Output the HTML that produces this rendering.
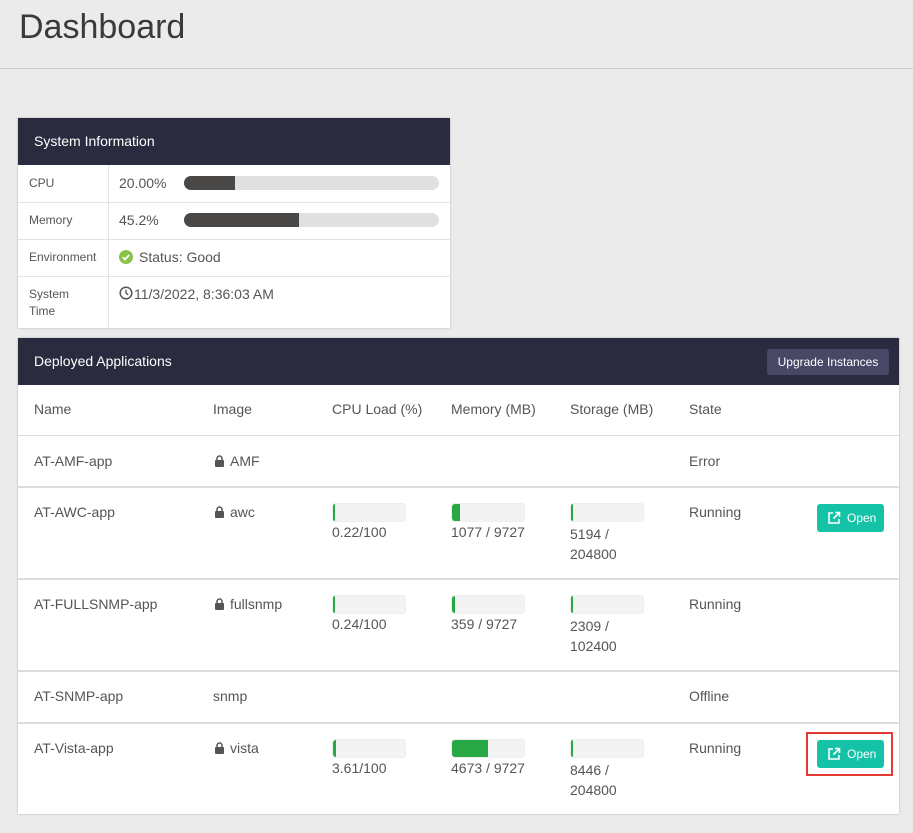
<!DOCTYPE html>
<html><head><style>
*{box-sizing:border-box;margin:0;padding:0}
body{width:913px;height:833px;background:#ebebeb;font-family:"Liberation Sans",Arial,sans-serif;position:relative;overflow:hidden;color:#555}
.a{position:absolute}
h1{position:absolute;left:19px;top:8px;font-size:34px;font-weight:normal;color:#3a3a3a;letter-spacing:0}
.card{position:absolute;background:#fff;box-shadow:0 0 2px rgba(0,0,0,.25)}
.hd{position:absolute;left:0;right:0;top:0;background:#2b2b40;color:#fff;font-size:14px}
.lbl{font-size:12px;color:#555}
.t{font-size:14px;color:#555}
.bar{position:absolute;background:#e0e0e0;border-radius:7px;height:14px;overflow:hidden}
.bar i{position:absolute;left:0;top:0;bottom:0;background:#4a4846}
.pb{position:absolute;width:74px;height:19px;background:#f3f3f3;border-radius:3px;overflow:hidden;border:1px solid #eee}
.pb i{position:absolute;left:0;top:0;bottom:0;background:#28a745;border-radius:3px 0 0 3px}
.hl{position:absolute;left:0;right:0;height:2px;background:#ddd}
.btn{position:absolute;width:67px;height:28px;background:#14c3a7;border-radius:3px;color:#fff;font-size:12px;line-height:28px;padding-left:30px}
.btn svg{position:absolute;left:10px;top:7px}
</style></head><body>
<h1>Dashboard</h1>
<div class="a" style="left:0;right:0;top:68px;height:1px;background:#ccc"></div>

<div class="card" style="left:18px;top:118px;width:432px;height:210px">
 <div class="hd" style="height:47px;padding:15px 16px;">System Information</div>
 <div class="a" style="left:90px;top:47px;width:1px;bottom:0;background:#e3e3e3"></div>
 <div class="a" style="left:0;right:0;top:84px;height:1px;background:#e3e3e3"></div>
 <div class="a" style="left:0;right:0;top:121px;height:1px;background:#e3e3e3"></div>
 <div class="a" style="left:0;right:0;top:158px;height:1px;background:#e3e3e3"></div>
 <div class="a lbl" style="left:11px;top:58px">CPU</div>
 <div class="a t" style="left:101px;top:57px">20.00%</div>
 <div class="bar" style="left:166px;top:58px;width:255px"><i style="width:51px"></i></div>
 <div class="a lbl" style="left:11px;top:95px">Memory</div>
 <div class="a t" style="left:101px;top:94px">45.2%</div>
 <div class="bar" style="left:166px;top:95px;width:255px"><i style="width:115px"></i></div>
 <div class="a lbl" style="left:11px;top:132px">Environment</div>
 <svg class="a" style="left:101px;top:132px" width="14" height="14" viewBox="0 0 14 14"><circle cx="7" cy="7" r="7" fill="#8bc34a"/><path d="M3.8 7.2l2.2 2.2 4.2-4.4" stroke="#fff" stroke-width="1.8" fill="none"/></svg>
 <div class="a t" style="left:121px;top:131px">Status: Good</div>
 <div class="a lbl" style="left:11px;top:168px;line-height:17px">System<br>Time</div>
 <svg class="a" style="left:101px;top:168px" width="14" height="14" viewBox="0 0 14 14"><circle cx="7" cy="7" r="5.8" stroke="#555" stroke-width="1.5" fill="none"/><path d="M7 3.8V7.3l2.2 1.5" stroke="#555" stroke-width="1.4" fill="none"/></svg>
 <div class="a t" style="left:116px;top:168px">11/3/2022, 8:36:03 AM</div>
</div>

<div class="card" style="left:18px;top:338px;width:881px;height:476px">
 <div class="hd" style="height:47px;padding:15px 16px;">Deployed Applications</div>
 <div class="a" style="left:749px;top:11px;width:122px;height:26px;background:#474766;border-radius:3px;color:#fff;font-size:12px;line-height:26px;text-align:center">Upgrade Instances</div>
 <div class="a t" style="left:16px;top:63px">Name</div>
 <div class="a t" style="left:195px;top:63px">Image</div>
 <div class="a t" style="left:314px;top:63px">CPU Load (%)</div>
 <div class="a t" style="left:433px;top:63px">Memory (MB)</div>
 <div class="a t" style="left:552px;top:63px">Storage (MB)</div>
 <div class="a t" style="left:671px;top:63px">State</div>
 <div class="hl" style="top:97px;height:1px"></div>
 <div class="hl" style="top:148px"></div>
 <div class="hl" style="top:240px"></div>
 <div class="hl" style="top:332px"></div>
 <div class="hl" style="top:384px"></div>

 <div class="a t" style="left:16px;top:115px">AT-AMF-app</div>
 <div class="a t" style="left:212px;top:115px">AMF</div>
 <div class="a t" style="left:671px;top:115px">Error</div>

 <div class="a t" style="left:16px;top:166px">AT-AWC-app</div>
 <div class="a t" style="left:212px;top:166px">awc</div>
 <div class="pb" style="left:314px;top:165px"><i style="width:2px"></i></div>
 <div class="a t" style="left:314px;top:186px">0.22/100</div>
 <div class="pb" style="left:433px;top:165px"><i style="width:8px"></i></div>
 <div class="a t" style="left:433px;top:186px">1077 / 9727</div>
 <div class="pb" style="left:552px;top:165px"><i style="width:2px"></i></div>
 <div class="a t" style="left:552px;top:186px;line-height:20px">5194 /<br>204800</div>
 <div class="a t" style="left:671px;top:166px">Running</div>
 <div class="btn" style="left:799px;top:166px"><svg width="14" height="14" viewBox="0 0 14 14" fill="none" stroke="#fff" stroke-width="1.6"><path d="M6 2H2v10h10V8"/><path d="M8 1.5h4.5V6M12.5 1.5L6.5 7.5"/></svg>Open</div>

 <div class="a t" style="left:16px;top:258px">AT-FULLSNMP-app</div>
 <div class="a t" style="left:212px;top:258px">fullsnmp</div>
 <div class="pb" style="left:314px;top:257px"><i style="width:2px"></i></div>
 <div class="a t" style="left:314px;top:278px">0.24/100</div>
 <div class="pb" style="left:433px;top:257px"><i style="width:3px"></i></div>
 <div class="a t" style="left:433px;top:278px">359 / 9727</div>
 <div class="pb" style="left:552px;top:257px"><i style="width:2px"></i></div>
 <div class="a t" style="left:552px;top:278px;line-height:20px">2309 /<br>102400</div>
 <div class="a t" style="left:671px;top:258px">Running</div>

 <div class="a t" style="left:16px;top:350px">AT-SNMP-app</div>
 <div class="a t" style="left:195px;top:350px">snmp</div>
 <div class="a t" style="left:671px;top:350px">Offline</div>

 <div class="a t" style="left:16px;top:402px">AT-Vista-app</div>
 <div class="a t" style="left:212px;top:402px">vista</div>
 <div class="pb" style="left:314px;top:401px"><i style="width:3px"></i></div>
 <div class="a t" style="left:314px;top:422px">3.61/100</div>
 <div class="pb" style="left:433px;top:401px"><i style="width:36px"></i></div>
 <div class="a t" style="left:433px;top:422px">4673 / 9727</div>
 <div class="pb" style="left:552px;top:401px"><i style="width:2px"></i></div>
 <div class="a t" style="left:552px;top:422px;line-height:20px">8446 /<br>204800</div>
 <div class="a t" style="left:671px;top:402px">Running</div>
 <div class="a" style="left:788px;top:394px;width:87px;height:44px;border:2px solid #e53935"></div>
 <div class="btn" style="left:799px;top:402px"><svg width="14" height="14" viewBox="0 0 14 14" fill="none" stroke="#fff" stroke-width="1.6"><path d="M6 2H2v10h10V8"/><path d="M8 1.5h4.5V6M12.5 1.5L6.5 7.5"/></svg>Open</div>
</div>

<svg class="a" style="left:214px;top:455px" width="11" height="12" viewBox="0 0 11 12"><rect x="1" y="5" width="9" height="7" rx="1" fill="#555"/><path d="M3 5V3.5a2.5 2.5 0 0 1 5 0V5" stroke="#555" stroke-width="1.5" fill="none"/></svg>
<svg class="a" style="left:214px;top:506px" width="11" height="12" viewBox="0 0 11 12"><rect x="1" y="5" width="9" height="7" rx="1" fill="#555"/><path d="M3 5V3.5a2.5 2.5 0 0 1 5 0V5" stroke="#555" stroke-width="1.5" fill="none"/></svg>
<svg class="a" style="left:214px;top:598px" width="11" height="12" viewBox="0 0 11 12"><rect x="1" y="5" width="9" height="7" rx="1" fill="#555"/><path d="M3 5V3.5a2.5 2.5 0 0 1 5 0V5" stroke="#555" stroke-width="1.5" fill="none"/></svg>
<svg class="a" style="left:214px;top:742px" width="11" height="12" viewBox="0 0 11 12"><rect x="1" y="5" width="9" height="7" rx="1" fill="#555"/><path d="M3 5V3.5a2.5 2.5 0 0 1 5 0V5" stroke="#555" stroke-width="1.5" fill="none"/></svg>
</body></html>
